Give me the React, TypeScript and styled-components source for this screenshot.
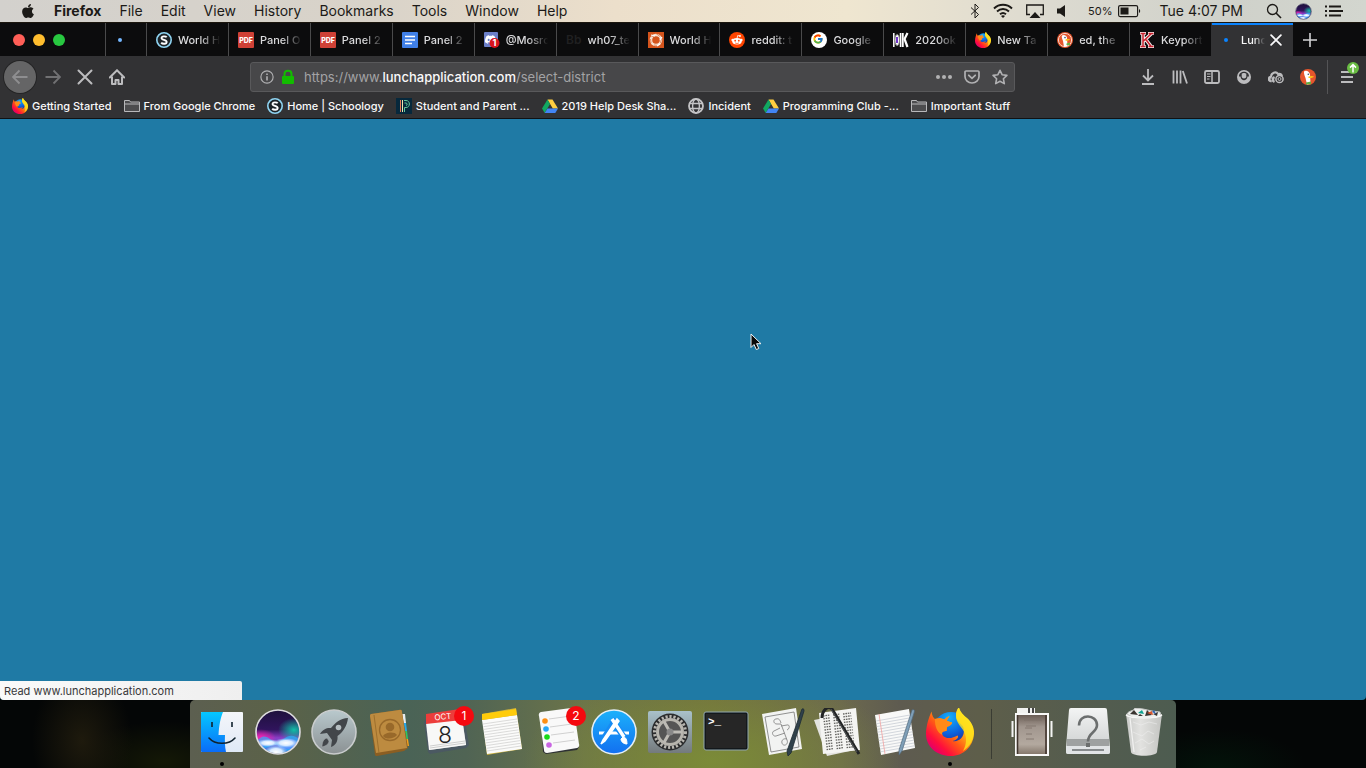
import React from "react";
import styled, { createGlobalStyle, css } from "styled-components";
import { FaApple } from "react-icons/fa";
import { FcGoogle } from "react-icons/fc";
import { SiDiscord } from "react-icons/si";

const Global = createGlobalStyle`
  * { box-sizing: border-box; }
  html, body { margin: 0; background: #040806; }
  body { font-family: Inter, "Noto Sans", sans-serif; font-size: 11px; }
  button { font: inherit; color: inherit; border: 0; padding: 0; background: none; }
  svg { display: block; flex: none; }
`;

const Desktop = styled.div`
  min-height: 100vh;
  display: flex;
  flex-direction: column;
`;

/* ---------- system menu bar ---------- */

const MenuBar = styled.header`
  height: 23px;
  padding: 0 23px 0 20px;
  display: flex;
  align-items: center;
  justify-content: space-between;
  color: #1c1a17;
  background: linear-gradient(90deg, #d3d1cd 0%, #d9d3c9 28%, #ecdfcb 45%, #efe6d0 62%, #dcdad0 77%, #cfd1ca 90%, #d3d6cf 100%);
  border-bottom: 1px solid #1b160e;
`;
const MenuGroup = styled.nav`
  display: flex;
  align-items: center;
  gap: 18px;
`;
const MenuItem = styled.button<{ $bold?: boolean }>`
  font-size: 14px;
  line-height: 22px;
  font-weight: ${(p) => (p.$bold ? 700 : 400)};
`;
const StatusGroup = styled.div`
  display: flex;
  align-items: center;
  gap: 13px;
`;
const BatteryStatus = styled.div`
  display: flex;
  align-items: center;
  gap: 5px;
  margin: 0 6px 0 9px;
  font-size: 11px;
`;
const Clock = styled.time`
  font-size: 14px;
  line-height: 22px;
  margin-right: 10px;
`;

/* ---------- browser window ---------- */

const Browser = styled.main`
  flex: 1;
  display: flex;
  flex-direction: column;
  position: relative;
  color: #f9f9fa;
`;
const TabStrip = styled.div`
  height: 33px;
  display: flex;
  background: #0c0c0d;
`;
const WindowButtons = styled.div`
  width: 105px;
  padding-left: 13px;
  display: flex;
  align-items: center;
  gap: 8px;
`;
const Light = styled.button<{ $color: string }>`
  width: 12px;
  height: 12px;
  border-radius: 50%;
  background: ${(p) => p.$color};
`;
const TabButton = styled.button<{ $pinned?: boolean; $active?: boolean }>`
  ${(p) => (p.$pinned ? css`flex: none; width: 41px;` : css`flex: 1 1 80px;`)}
  min-width: 0;
  display: flex;
  align-items: center;
  gap: 6px;
  padding: 0 6px 0 9px;
  border-left: 1px solid #4a4a4b;
  color: #dcdcde;
  text-align: left;
  ${(p) =>
    p.$active &&
    css`
      gap: 4px;
      padding-right: 11px;
      background: #323234;
      border-left-color: #323234;
      box-shadow: inset 0 2px 0 #0a84ff;
      color: #f9f9fa;
    `}
`;
const TabTitle = styled.span`
  flex: 1;
  min-width: 0;
  overflow: hidden;
  white-space: nowrap;
  line-height: 16px;
  font-weight: 500;
  mask-image: linear-gradient(90deg, #000 50%, transparent 96%);
`;
const LoadingDot = styled.span<{ $color: string }>`
  width: 16px;
  flex: none;
  &::before {
    content: "";
    display: block;
    width: 4px;
    height: 4px;
    margin-left: 3px;
    border-radius: 50%;
    background: ${(p) => p.$color};
  }
`;
const NewTabButton = styled.button`
  flex: none;
  width: 73px;
  padding-left: 9px;
`;

const NavBar = styled.div`
  height: 41px;
  display: flex;
  align-items: center;
  background: #323234;
  padding: 0 3px 0 4px;
`;
const NavButtons = styled.div`
  width: 246px;
  display: flex;
  align-items: center;
`;
const ToolButton = styled.button<{ $round?: boolean }>`
  width: 32px;
  height: 32px;
  display: grid;
  place-items: center;
  color: #bcbcbe;
  ${(p) =>
    p.$round &&
    css`
      margin-right: 1px;
      border-radius: 50%;
      background: #656566;
      box-shadow: 0 0 0 1px #242425;
      color: #8e8e90;
    `}
`;
const ForwardButton = styled(ToolButton)`
  color: #717173;
`;
const UrlBar = styled.label`
  flex: 1;
  height: 30px;
  display: flex;
  align-items: center;
  gap: 6px;
  padding: 0 6px 0 9px;
  border: 1px solid #59595b;
  border-radius: 3px;
  background: #474749;
  color: #b1b1b3;
`;
const UrlText = styled.span`
  margin-left: 2px;
  font-size: 13px;
  line-height: 20px;
  color: #a3a3a5;
  white-space: nowrap;
  b { font-weight: 500; color: #f9f9fa; }
`;
const UrlInput = styled.input`
  flex: 1;
  min-width: 0;
  height: 24px;
  border: 0;
  outline: 0;
  background: transparent;
  color: #f9f9fa;
  font: inherit;
`;
const UrlActions = styled.span`
  display: flex;
  align-items: center;
  gap: 12px;
`;
const ToolGroup = styled.div`
  width: 348px;
  display: flex;
  justify-content: flex-end;
  align-items: center;
`;
const Divider = styled.span`
  width: 1px;
  height: 34px;
  margin: 0 3px;
  background: #545456;
`;
const MenuButton = styled(ToolButton)`
  position: relative;
`;
const UpdateBadge = styled.span`
  position: absolute;
  top: 1px;
  right: 4px;
`;

const BookmarkBar = styled.nav`
  height: 22px;
  padding: 0 12px 4px;
  display: flex;
  align-items: center;
  gap: 12px;
  background: #323234;
  border-bottom: 1px solid #101214;
`;
const Bookmark = styled.a`
  display: flex;
  align-items: center;
  gap: 4px;
  color: #f9f9fa;
  text-decoration: none;
  white-space: nowrap;
  line-height: 16px;
  font-weight: 500;
`;
const Page = styled.section`
  flex: 1;
  background: #1f7aa5;
  border-radius: 0 0 4px 4px;
`;
const StatusTip = styled.output`
  position: absolute;
  left: 0;
  bottom: 0;
  width: 242px;
  height: 19px;
  padding-left: 4px;
  border-radius: 0 2px 0 4px;
  background: linear-gradient(90deg, #fafafa, #efefef);
  color: #38383a;
  line-height: 20px;
`;
const Pointer = styled.span`
  position: absolute;
  left: 750px;
  top: 310px;
`;

/* ---------- dock ---------- */

const DockArea = styled.footer`
  height: 68px;
  display: flex;
  justify-content: center;
  background:
    radial-gradient(ellipse 50px 70px at 6% 60%, #1e1a0d 0%, transparent 100%),
    radial-gradient(ellipse 90px 40px at 12% 90%, #141806 0%, transparent 100%),
    radial-gradient(ellipse 90px 40px at 89% 100%, #03130a 0%, transparent 100%),
    #040606;
`;
const Dock = styled.nav`
  display: flex;
  gap: 8px;
  padding: 0 8px;
  border-radius: 5px 5px 0 0;
  background:
    radial-gradient(ellipse 190px 90px at 53% 90%, #7b8b38 0%, transparent 100%),
    linear-gradient(90deg, #5c5f50 0%, #5b6248 9%, #4a6356 22%, #506454 28%, #6c7449 40%, #73713f 53%, #6c694e 66%, #5e5b50 72%, #5e5e4a 80%, #535c4f 92%, #4d5c50 100%);
`;
const DockItem = styled.button<{ $running?: boolean }>`
  position: relative;
  width: 48px;
  height: 68px;
  padding-top: 8px;
  display: flex;
  align-items: flex-start;
  &::after {
    content: "";
    display: ${(p) => (p.$running ? "block" : "none")};
    position: absolute;
    left: 22px;
    bottom: 2px;
    width: 4px;
    height: 4px;
    border-radius: 50%;
    background: #000;
  }
`;
const DockBadge = styled.span`
  position: absolute;
  top: 6px;
  right: -4px;
  width: 20px;
  height: 20px;
  border-radius: 50%;
  background: #f5090f;
  color: #fff;
  font-size: 12px;
  line-height: 20px;
  text-align: center;
`;
const DockDivider = styled.span`
  width: 1px;
  height: 50px;
  margin: 9px 8px 0 9px;
  background: #3a3c33;
`;

/* ---------- small icons ---------- */

const Svg = ({ s = 16, children, vb = "0 0 16 16", w }: { s?: number; w?: number; vb?: string; children: React.ReactNode }) => (
  <svg width={w ?? s} height={s} viewBox={vb} fill="none">{children}</svg>
);

const FirefoxLogo = ({ s, id }: { s: number; id: string }) => (
  <Svg s={s} vb="0 0 48 48">
    <defs>
      <linearGradient id={id + "-body"} x1="0.85" y1="0.1" x2="0.15" y2="0.85">
        <stop offset="0" stopColor="#fff12e" /><stop offset="0.3" stopColor="#ffc018" />
        <stop offset="0.6" stopColor="#ff5a15" /><stop offset="0.85" stopColor="#ff0f3c" /><stop offset="1" stopColor="#e80064" />
      </linearGradient>
      <radialGradient id={id + "-globe"} cx="0.45" cy="0.15" r="0.9">
        <stop offset="0" stopColor="#15b0fb" /><stop offset="0.5" stopColor="#0b62de" /><stop offset="1" stopColor="#2a1575" />
      </radialGradient>
    </defs>
    <circle cx="25" cy="22" r="18" fill={`url(#${id}-globe)`} />
    <path d="M5.500 3.500C6 7.500 7.500 10 9 11c4-1.500 7-.5 9.500.5 2-2.500 4-3 5-3-2 2-2.500 3.500-2.500 4.500l5 1.500c.3 2-3 3.500-5 4.500l-.5 4c-3 0-5.500 1-4 4 3 4.500 10 3.500 15 .5 2 2-2 5-5 5.500 7 1.500 13-5 11-13C36.500 16 30 14 30 7c0-4 1.500-6 3-8 .5 4 4 8 9 12 4 4 6.500 9.500 6 15C47 39 37 48 25 48 10 48 0 38 0 26 0 18 3 9 5.500 3.500Z" fill={`url(#${id}-body)`} />
    <path d="M9 11c4-1.500 7-.5 9.500.5 2-2.500 4-3 5-3-2 2-2.500 3.500-2.500 4.500l5 1.500c.3 2-3 3.500-5 4.500l-.5 4c-3 0-5.500 1-4 4-5-2-8-9-7.500-16Z" fill="#ff8a18" />
    <path d="M33 0c.5 4 4 7 9 11 4 4 6 9.500 5.500 15C47 33 43 39 37 43c4-7 4-15 0-21-2.500-4-7-8-7-14 0-4 1.500-6 3-8Z" fill="#ffe21c" fillOpacity="0.8" />
  </Svg>
);

const Schoology = () => (
  <Svg>
    <circle cx="8" cy="8" r="7.200" fill="#1d2327" stroke="#8fd4f2" strokeWidth="1.600" />
    <path d="M10.700 5.300C9.800 4.200 5.700 3.800 5.500 6c-.2 2.200 5.200 1.500 5.200 4 0 2.300-4.300 2.200-5.500.6" stroke="#fff" strokeWidth="1.800" />
  </Svg>
);
const Pdf = () => (
  <Svg>
    <rect width="16" height="16" rx="1" fill="#cf4136" />
    <text x="8" y="10.700" textAnchor="middle" fontSize="7" fontWeight="800" fill="#fff">PDF</text>
  </Svg>
);
const Docs = () => (
  <Svg>
    <rect width="16" height="16" rx="1" fill="#4080e8" />
    <path d="M3 4.500h10M3 8h10M3 11.500h7" stroke="#fff" strokeWidth="1.700" />
  </Svg>
);
const DiscordTab = () => (
  <Svg>
    <rect x="0" y="0" width="14" height="15" rx="1" fill="#6b7fc8" />
    <SiDiscord x="1" y="2" width="12" height="10" color="#fff" />
    <circle cx="10.500" cy="11" r="5" fill="#d8141c" />
    <text x="10.500" y="14.200" textAnchor="middle" fontSize="9" fontWeight="700" fill="#fff">1</text>
  </Svg>
);
const Blackboard = () => (
  <Svg><text x="0" y="12" fontSize="12" fontWeight="600" fill="#202021">Bb</text></Svg>
);
const OrigamiLogo = () => (
  <Svg>
    <rect width="16" height="16" fill="#d4541c" />
    <circle cx="8" cy="8" r="5" stroke="#f7e3d4" strokeWidth="2.400" />
    <path d="M2.500 3.500 6 5M8 1.500l4 3M13.500 6l-1 5M11 13.500l-5-.5M3 11l-.5-4" stroke="#d4541c" strokeWidth=".6" />
    <path d="M3 3 7 4M14 5l-2 3M9 14l3-2" stroke="#fff" strokeWidth="1.200" />
  </Svg>
);
const RedditTab = () => (
  <Svg>
    <circle cx="8" cy="8" r="8" fill="#ff4500" />
    <ellipse cx="8" cy="9.300" rx="4.700" ry="3.300" fill="#fff" />
    <circle cx="3.600" cy="8" r="1.200" fill="#fff" /><circle cx="12.400" cy="8" r="1.200" fill="#fff" />
    <path d="m8 6.500.7-3 2.200.6" stroke="#fff" strokeWidth=".8" /><circle cx="11" cy="4" r=".9" fill="#fff" />
    <circle cx="6.200" cy="8.700" r=".9" fill="#ff4500" /><circle cx="9.800" cy="8.700" r=".9" fill="#ff4500" />
    <path d="M6 10.800c1 .9 3 .9 4 0" stroke="#ff4500" strokeWidth=".7" />
  </Svg>
);
const GoogleTab = () => (
  <Svg><circle cx="8" cy="8" r="8" fill="#fff" /><FcGoogle x="1.500" y="1.500" width="13" height="13" /></Svg>
);
const OkTab = () => (
  <Svg>
    <rect y="1" width="15" height="14" fill="#111" />
    <path d="M.8 1v14M7.500 1v14" stroke="#fff" strokeWidth="1.500" />
    <path d="M9.700 1v14" stroke="#fff" strokeWidth="2" />
    <ellipse cx="4.200" cy="8" rx="2.300" ry="5.500" fill="#fff" stroke="#888" />
    <path d="M4 5v6" stroke="#7034c8" strokeWidth="2" />
    <path d="M14.500 1 11.500 7l3 8" stroke="#fff" strokeWidth="2.200" />
  </Svg>
);
const Duck = () => (
  <Svg>
    <circle cx="8" cy="8" r="8" fill="#e5552c" />
    <circle cx="8" cy="8" r="6.600" stroke="#f7d3c6" strokeWidth="1" />
    <path d="M5 3.500c1.500-1.200 4.500-.5 5 2l.2 3.500.3 5-3.500.8L6 9C4.800 6 4.500 4.500 5 3.500Z" fill="#fff" />
    <circle cx="8" cy="5.600" r=".8" fill="#34506b" />
    <path d="M8.500 7.500c2-.6 3.500-.5 4.500 0-1 1-3 1.500-4.500 1.300Z" fill="#fbc615" />
    <path d="M9.500 11.500 13 10.500v3L9.500 13Z" fill="#62b145" />
  </Svg>
);
const DuckPlain = () => (
  <Svg>
    <circle cx="8" cy="8" r="8" fill="#e5552c" />
    <path d="M4 2.500C6 .8 9.500 2.500 10 5.500l.2 3 .3 6.500-3.500.5L5.500 9C4.300 6 3.800 4 4 2.500Z" fill="#fff" />
    <circle cx="8.300" cy="5.300" r=".8" fill="#34506b" />
    <path d="M8.500 7.500c2.500-.8 4.500-.6 5.500 0-1 1.200-3.500 1.700-5.500 1.500Z" fill="#fbc615" />
    <path d="M6 13.500 11 12.500v2.700L6 15.400Z" fill="#62b145" />
  </Svg>
);
const Keyport = () => (
  <Svg>
    <path d="M1 1h6M1 15h6M9 1h6M9 15h6M4 1v14M12.500 1.500 4.500 9M6.500 7l6 8" stroke="#f5eeee" strokeWidth="3.600" />
    <path d="M1.500 1.500h5M1.500 14.500h5M9.500 1.500h5M9.500 14.500h5M4 1v14M12.500 1.500 4.500 9M6.500 7l6 8" stroke="#c8222e" strokeWidth="1.500" />
  </Svg>
);
const Folder = () => (
  <Svg>
    <path d="M.5 13.500v-11h5l1 1.500h9v9.500ZM.5 6h15" fill="#4c4c4e" stroke="#b8b8ba" />
  </Svg>
);
const PowerSchool = () => (
  <Svg>
    <rect width="16" height="16" fill="#06283c" />
    <path d="M4.500 2v12" stroke="#e8795a" /><path d="M6.500 2v12" stroke="#f0e6b0" />
    <path d="M8 2.500h2c4.500 0 4.500 7 0 7H8.500V14M8.500 5h1.500c1.500 0 1.500 2.500 0 2.500" stroke="#5fc89b" />
  </Svg>
);
const Drive = () => (
  <Svg>
    <path d="M5.500 1.500h5l5.500 9h-5.200Z" fill="#ffcd40" />
    <path d="M5.500 1.500 0 10.500 2.700 15 8 6Z" fill="#11a861" />
    <path d="M5.500 10.500H16L13.300 15H2.700Z" fill="#4285f4" />
  </Svg>
);
const Globe = () => (
  <Svg>
    <circle cx="8" cy="8" r="7" stroke="#c4c4c6" strokeWidth="1.800" />
    <path d="M1.500 5.500h13M1.500 10.500h13" stroke="#c4c4c6" strokeWidth="1.400" />
    <ellipse cx="8" cy="8" rx="3.400" ry="7" stroke="#c4c4c6" strokeWidth="1.400" />
  </Svg>
);
const Arrow = ({ back }: { back?: boolean }) => (
  <Svg>
    <path d={back ? "M15.500 8H1M7.500 1.500 1 8l6.500 6.500" : "M.5 8H15M8.500 1.500 15 8l-6.500 6.500"} stroke="currentColor" strokeWidth="1.800" />
  </Svg>
);
const Cross = ({ s = 16 }: { s?: number }) => (
  <Svg s={s}><path d="M1.500 1.500l13 13M14.500 1.500l-13 13" stroke="currentColor" strokeWidth={s > 12 ? 2 : 2.400} strokeLinecap="round" /></Svg>
);
const Home = () => (
  <Svg>
    <path d="M.8 8.500 8 1.300l7.200 7.200" stroke="currentColor" strokeWidth="2" strokeLinecap="round" />
    <path d="M3 7.500V15h3.500v-4h3v4H13V7.500" stroke="currentColor" strokeWidth="2" strokeLinejoin="round" />
  </Svg>
);
const Siri = ({ s, id }: { s: number; id: string }) => (
  <Svg s={s} vb="0 0 48 48">
    <defs>
      <linearGradient id={id + "-sky"} x1="0" y1="0" x2="0" y2="1">
        <stop offset="0" stopColor="#1b1038" /><stop offset="0.45" stopColor="#30145c" /><stop offset="0.62" stopColor="#8a3cc4" /><stop offset="1" stopColor="#1a9bf0" />
      </linearGradient>
      <radialGradient id={id + "-pink"}><stop offset="0" stopColor="#ff1fae" /><stop offset="1" stopColor="#ff1fae" stopOpacity="0" /></radialGradient>
      <radialGradient id={id + "-teal"}><stop offset="0" stopColor="#10c0a8" /><stop offset="1" stopColor="#10c0a8" stopOpacity="0" /></radialGradient>
      <radialGradient id={id + "-white"}><stop offset="0" stopColor="#fff" /><stop offset="0.5" stopColor="#d8eaff" /><stop offset="1" stopColor="#9fd4ff" stopOpacity="0" /></radialGradient>
      <clipPath id={id + "-clip"}><circle cx="24" cy="24" r="21.500" /></clipPath>
    </defs>
    <g clipPath={`url(#${id}-clip)`}>
      <rect width="48" height="48" fill={`url(#${id}-sky)`} />
      <ellipse cx="40" cy="22" rx="16" ry="12" fill={`url(#${id}-teal)`} />
      <ellipse cx="7" cy="30" rx="15" ry="9" fill={`url(#${id}-pink)`} />
      <path d="M2 34C10 24 14 30 20 34s14-14 26-2v8C36 48 30 40 24 37S10 46 2 38Z" fill="#24b8ff" fillOpacity="0.65" />
      <path d="M2 38c8-6 12-8 18-2s14-14 24 0c-8 7-15 7-21 1S10 42 2 38Z" fill="#5a8dff" fillOpacity="0.8" />
      <ellipse cx="14" cy="35" rx="12" ry="4" fill={`url(#${id}-white)`} />
      <ellipse cx="32" cy="35" rx="13" ry="5" fill={`url(#${id}-white)`} />
      <ellipse cx="22" cy="44" rx="12" ry="7" fill={`url(#${id}-white)`} />
    </g>
    <circle cx="24" cy="24" r="22" stroke={s > 20 ? "#dddbe0" : "#2b2450"} strokeWidth="1.600" />
  </Svg>
);

/* ---------- dock artwork, 48 x 48 ---------- */

const Art = ({ children }: { children: React.ReactNode }) => <Svg s={48} vb="0 0 48 48">{children}</Svg>;

const Finder = () => (
  <Art>
    <defs><linearGradient id="finder-left" x1="0" y1="0" x2="0" y2="1"><stop stopColor="#05c8ff" /><stop offset="1" stopColor="#0a6cf8" /></linearGradient>
      <linearGradient id="finder-right" x1="0" y1="0" x2="0" y2="1"><stop stopColor="#f4f6fa" /><stop offset="1" stopColor="#dfe9f6" /></linearGradient></defs>
    <rect x="3" y="4" width="42" height="40" rx="1" fill="url(#finder-right)" />
    <path d="M4 4h21c-2.500 6-4 13-4.500 23H27c-.3 6-.2 11 1 17H4a1 1 0 0 1-1-1V5a1 1 0 0 1 1-1Z" fill="url(#finder-left)" />
    <path d="M14 14v5M34 14v5" stroke="#10222e" strokeWidth="1.600" />
    <path d="M11 30c6 7 20 7 26 0" stroke="#10222e" strokeWidth="1.600" strokeLinecap="round" />
  </Art>
);
const Launchpad = () => (
  <Art>
    <defs><linearGradient id="launchpad" x1="0" y1="0" x2="0" y2="1"><stop stopColor="#b9c9cd" /><stop offset="1" stopColor="#8b9193" /></linearGradient></defs>
    <circle cx="24" cy="24" r="22" fill="url(#launchpad)" stroke="#c9cccd" strokeWidth="1.600" />
    <path d="M38 10c-8 .5-13 5-17 10-4-.5-8 1-11 6l7-1 5 7-1 7c5-2 7-6 6.500-11C33 24 37 18 38 10Z" fill="#42464a" />
    <circle cx="28.500" cy="19.500" r="2.800" fill="#b5bec1" />
    <path d="M17 30c-4 1-5 5-5 9 4-1 7-3 7-6Z" fill="#42464a" stroke="#a5aaac" strokeWidth=".6" />
  </Art>
);
const Contacts = () => (
  <Art>
    <path d="m35 6 4 0 1 9h-4Z" fill="#e8ecee" /><path d="m37 15h3l1 8h-3Z" fill="#27a9e8" />
    <path d="M38 23h3l1 8h-3Z" fill="#31c463" /><path d="M39 31h3l1 7h-3Z" fill="#f5a21e" />
    <path d="m5 6 28-4a2 2 0 0 1 3 2l6 36-4 3-27 5a2 2 0 0 1-2-1L4 8a2 2 0 0 1 1-2Z" fill="#8b5e22" />
    <path d="m5 6 28-4a2 2 0 0 1 3 2l5 36-31 5L4 8a2 2 0 0 1 1-2Z" fill="#bd8b40" />
    <path d="m8 7 5 38" stroke="#9d6f2c" />
    <circle cx="24" cy="22" r="10.500" stroke="#98692a" strokeWidth="1.300" />
    <circle cx="24" cy="19" r="4.300" fill="#98692a" /><path d="M17 28c2-4 12-5 14-1-3 4-11 5-14 1Z" fill="#98692a" />
  </Art>
);
const Calendar = () => (
  <Art>
    <path d="m2 14 5-8 34-5 6 36-3 3-36 6-2-2Z" fill="#4b5962" />
    <path d="m6 12 34-4 4 29-36 5Z" fill="#c8c8c8" />
    <path d="m4 15 36-4 4 26-37 5Z" fill="#f8f8f7" />
    <path d="M4 6 38 1l2 11-36 4Z" fill="#ec3d3b" />
    <text x="21" y="11.500" textAnchor="middle" fontSize="8" fill="#fff" transform="rotate(-6 21 10)">OCT</text>
    <text x="23" y="35" textAnchor="middle" fontSize="23" fontWeight="300" fill="#222">8</text>
    <path d="m8 38 35-5M8 40l35-5" stroke="#bcbcbc" strokeWidth=".7" />
  </Art>
);
const lines = (n: number, y0: number, dy: number, a: number, b: number, slope: number) =>
  Array.from({ length: n }, (_, i) => `M${a + i * 0.4} ${y0 + i * dy}l${b - a} ${-slope}`).join("");
const Notes = () => (
  <Art>
    <path d="M4 6 38 0l6 41-35 6Z" fill="#cdb23d" />
    <path d="m4 12 35-5 5 34-35 5Z" fill="#fbfbfa" />
    <path d="M4 6 38 1l1 6-35 5Z" fill="#ffcc0a" />
    <path d={lines(11, 16, 2.7, 5, 39, 5)} stroke="#d2d2d0" strokeWidth=".8" />
  </Art>
);
const Reminders = () => (
  <Art>
    <path d="m7 6 32-4 6 37-2 3-31 4-3-2Z" fill="#2d3033" />
    <path d="m7 4 30-4a3 3 0 0 1 3 2l5 34a3 3 0 0 1-2 4l-30 5a3 3 0 0 1-3-3L5 8a3 3 0 0 1 2-4Z" fill="#f9f9f9" />
    <path d="m15 11 22-3M16 19l22-3M17 27l23-3M19 35l22-3" stroke="#ccc" strokeWidth=".9" />
    <circle cx="11" cy="13" r="2.800" fill="#ff8f12" /><circle cx="12" cy="21" r="2.800" fill="#26a6f8" />
    <circle cx="13" cy="29" r="2.800" fill="#17d916" /><circle cx="15" cy="37" r="2.800" fill="#c964e2" />
  </Art>
);
const AppStore = () => (
  <Art>
    <defs><linearGradient id="app-store" x1="0" y1="0" x2="0" y2="1"><stop stopColor="#1cb1fb" /><stop offset="1" stopColor="#126ff0" /></linearGradient></defs>
    <circle cx="24" cy="24" r="22" fill="url(#app-store)" stroke="#e4eef6" strokeWidth="1.600" />
    <path d="M9 25h30" stroke="#fff" strokeWidth="3" />
    <path d="M26 11 12 33" stroke="#178bf3" strokeWidth="6" /><path d="m22 12 14 20" stroke="#178bf3" strokeWidth="6" />
    <path d="M27 11 13 32l-2 4 4-3L29 13Z" fill="#fff" stroke="#fff" strokeWidth="1.500" />
    <path d="m22 11 12 18" stroke="#fff" strokeWidth="3.400" />
    <path d="M33 29c3 0 4 3 4 7-3 0-6-2-6-5Z" fill="#fff" stroke="#fff" />
  </Art>
);
const Settings = () => (
  <Art>
    <defs><linearGradient id="settings-plate" x1="0" y1="0" x2="0" y2="1"><stop stopColor="#a9c1ca" /><stop offset="1" stopColor="#747a7d" /></linearGradient></defs>
    <rect x="2" y="3" width="44" height="42" rx="2" fill="url(#settings-plate)" />
    <circle cx="24" cy="24" r="18.500" fill="#2b2c2d" />
    <circle cx="24" cy="24" r="15.500" stroke="#b8b6b0" strokeWidth="3" strokeDasharray="2.200 1.800" />
    <circle cx="24" cy="24" r="12.500" fill="#555" stroke="#b7b5ae" strokeWidth="3" />
    <path d="M24 24h12M24 24l-6-10.500M24 24l-6 10.500" stroke="#bdbbb5" strokeWidth="3" />
    <circle cx="24" cy="24" r="3.500" fill="#888" />
  </Art>
);
const Terminal = () => (
  <Art>
    <rect x="2" y="4" width="44" height="38" rx="2" fill="#13181b" stroke="#91a6af" />
    <rect x="4" y="6" width="40" height="34" fill="#262626" />
    <text x="6" y="17" fontSize="11" fontWeight="700" fontFamily="Liberation Mono, monospace" fill="#fff">&gt;_</text>
  </Art>
);
const ScriptEditor = () => (
  <Art>
    <path d="m4 6 34-6 6 41-33 6Z" fill="#f2f3f2" />
    <path d="m7 9 29-5 5 35-28 5Z" stroke="#777" strokeWidth=".8" />
    <path d="M18 11c-3 0-3 5 1 5h4l6 16c2 5-4 7-5 3-1-3 2-5 5-4M18 11c3-1 4 1 5 4M22 20l-6 3c-3 1-1 6 2 5l9-3M23 18l6-1c3-1 3 4 0 5" stroke="#888" strokeWidth=".9" />
    <path d="M44 1c2-1 2 1 2 2L33 45l-3 3-1-5Z" fill="#30414b" stroke="#1d2b32" strokeWidth=".8" />
  </Art>
);
const TextPages = () => (
  <Art>
    <path d="m0 12 10-2 35 31-32 7Z" fill="#e3e3e0" />
    <path d="M5 5 42 0l4 42-37 4Z" fill="#f4f4f2" />
    {[0, 1, 2, 3, 4, 5, 6, 7, 8, 9, 10, 11, 12].map((i) => (
      <path key={i} d={`m${9 + i * 0.3} ${8 + i * 2.8} 7-1m3 0 7-1m3 0 8-1`} stroke="#62625f" strokeWidth="1.300" strokeDasharray="1.600 .8" />
    ))}
    <path d="M8 10C8 2 14-3 18 1l27 45" stroke="#222425" strokeWidth="3" />
    <path d="M17 1l26 43" stroke="#66696b" strokeWidth=".7" />
  </Art>
);
const TextEdit = () => (
  <Art>
    <path d="m5 7 34-6 6 39-34 7Z" fill="#f9f9f8" />
    <path d={lines(12, 13, 2.8, 6, 40, 6)} stroke="#c8cdd4" strokeWidth=".8" />
    <path d="m9 6 6 40" stroke="#f2a1a0" strokeWidth=".8" />
    <path d="M42 2c2-1 3 0 2 3L32 43l-3 4 0-5Z" fill="#7f9fb8" stroke="#52697b" strokeWidth=".7" />
  </Art>
);
const Photo = () => (
  <Art>
    <defs>
      <linearGradient id="photo-paper" x1="0" y1="0" x2="0" y2="1"><stop stopColor="#6a5d55" /><stop offset="0.3" stopColor="#a1968e" /><stop offset="0.75" stopColor="#b3a99f" /><stop offset="1" stopColor="#85786c" /></linearGradient>
    </defs>
    <path d="M9-1h18v7H9Z" fill="#f1f1ef" /><path d="M21 0v5M25 0v5" stroke="#444" strokeWidth="2" />
    <path d="M4.500 13v16M43.500 13v16" stroke="#f4f4f3" strokeWidth="2" />
    <rect x="7" y="5" width="34" height="43" fill="#f8f8f7" />
    <rect x="9" y="7" width="30" height="39" fill="url(#photo-paper)" />
    <path d="M9.500 7v39M38 7v39" stroke="#41352d" strokeWidth="1.600" />
    <path d="M16 12h18M18 18h10M17 20h7M18 26h6M18 31h8" stroke="#7b6f67" strokeWidth=".8" />
  </Art>
);
const Drawer = () => (
  <Art>
    <defs><linearGradient id="drawer-lid" x1="0" y1="0" x2="0" y2="1"><stop stopColor="#f3f4f4" /><stop offset="1" stopColor="#c9cccc" /></linearGradient></defs>
    <path d="M7 0h34a2 2 0 0 1 2 2l3 37v5a2 2 0 0 1-2 2H4a2 2 0 0 1-2-2v-5L5 2a2 2 0 0 1 2-2Z" fill="url(#drawer-lid)" />
    <path d="M3 31h42v7H3Z" fill="#9ea1a1" /><path d="M3 38h43v6a2 2 0 0 1-2 2H4a2 2 0 0 1-2-2v-6Z" fill="#e1e4e6" />
    <path d="M8 42h32" stroke="#55595b" strokeWidth="1.300" />
    <path d="M15 17.500C15 5 33 6 33 17c0 8-9 7-9 16.500" stroke="#6b6e6e" strokeWidth="2.600" />
    <rect x="22" y="35" width="4" height="4" fill="#6b6e6e" />
  </Art>
);
const Trash = () => (
  <Art>
    <defs><linearGradient id="trash-side"><stop stopColor="#c9cac8" /><stop offset="0.4" stopColor="#e2e2e0" /><stop offset="1" stopColor="#c4c5c2" /></linearGradient></defs>
    <path d="M6 6h36l-5 38c-1 5-25 5-26 0Z" fill="url(#trash-side)" />
    <path d="M7 6c2-4 6-2 8-6l8 1 9 2 8 1 1 4-8 2H14Z" fill="#eef0ee" stroke="#c4c6c4" />
    <path d="m10 6 4-4 4 5Zm15 2 2-6 5 5Zm8-2 5-2-1 4Zm-15 2 2-2 3 2Z" fill="#3a3430" /><path d="m18 5 4-3 2 4Z" fill="#10a391" /><path d="m27 5 5-2 1 4Z" fill="#d8562d" /><path d="m32 4 2-2 2 4Z" fill="#2c60b4" />
    <path d="M6 7c5 4 31 4 36 0" stroke="#f7f7f6" strokeWidth="1.600" />
    <path d="m13 14 8 3 8-3 8 2M13 24l9 4 6-5 6 3M15 35l7-4 7 5 5-3M20 42l6-3" stroke="#f2f2f1" strokeOpacity=".5" />
    <path d="m10 10 4 34" stroke="#f2f2f1" strokeWidth="1.200" />
  </Art>
);

/* ---------- data ---------- */

const menus = ["File", "Edit", "View", "History", "Bookmarks", "Tools", "Window", "Help"];
const tabs: [string, React.ReactNode][] = [
  ["World H", <Schoology />], ["Panel O", <Pdf />], ["Panel 2", <Pdf />], ["Panel 2", <Docs />],
  ["@Mosro", <DiscordTab />], ["wh07_te", <Blackboard />], ["World H", <OrigamiLogo />], ["reddit: t", <RedditTab />],
  ["Google", <GoogleTab />], ["2020ok", <OkTab />], ["New Ta", <FirefoxLogo s={16} id="fx-tab" />], ["ed, the", <Duck />], ["Keyport", <Keyport />],
];
const bookmarks: [string, React.ReactNode][] = [
  ["Getting Started", <FirefoxLogo s={16} id="fx-mark" />], ["From Google Chrome", <Folder />], ["Home | Schoology", <Schoology />],
  ["Student and Parent ...", <PowerSchool />], ["2019 Help Desk Sha...", <Drive />], ["Incident", <Globe />],
  ["Programming Club -...", <Drive />], ["Important Stuff", <Folder />],
];
const apps: { art: React.ReactNode; badge?: number; running?: boolean }[] = [
  { art: <Finder />, running: true }, { art: <Siri s={48} id="siri-dock" /> }, { art: <Launchpad /> }, { art: <Contacts /> },
  { art: <Calendar />, badge: 1 }, { art: <Notes /> }, { art: <Reminders />, badge: 2 }, { art: <AppStore /> },
  { art: <Settings /> }, { art: <Terminal /> }, { art: <ScriptEditor /> }, { art: <TextPages /> }, { art: <TextEdit /> },
  { art: <FirefoxLogo s={48} id="fx-dock" />, running: true },
];

export default function App() {
  return (
    <Desktop>
      <Global />
      <MenuBar>
        <MenuGroup>
          <FaApple size={16} />
          <MenuItem $bold>Firefox</MenuItem>
          {menus.map((m) => <MenuItem key={m}>{m}</MenuItem>)}
        </MenuGroup>
        <StatusGroup>
          <Svg w={10} vb="0 0 10 16"><path d="m1 4.500 7.500 7L5 15V1l3.500 3.500-7.500 7" stroke="currentColor" strokeWidth="1" /></Svg>
          <Svg w={20} vb="0 0 20 16">
            <path d="M1 5.500c5-5 13-5 18 0M4 8.500c3.500-3.300 8.500-3.300 12 0M7 11.300c2-1.700 4-1.700 6 0" stroke="currentColor" strokeWidth="1.900" />
            <path d="m8 13 2 2 2-2c-1-1-3-1-4 0Z" fill="currentColor" />
          </Svg>
          <Svg w={18} vb="0 0 18 16"><path d="M4 11.500H.7V2h16.600v9.500H14" stroke="currentColor" strokeWidth="1.300" /><path d="M9 9l5.500 6h-11Z" fill="currentColor" /></Svg>
          <Svg w={9} vb="0 0 9 16"><path d="M0 5.500h3l5-3.500v12l-5-3.500H0Z" fill="currentColor" /></Svg>
          <BatteryStatus>
            50%
            <Svg w={23} vb="0 0 23 16"><rect x=".6" y="2.600" width="19" height="11" rx="1.500" stroke="currentColor" strokeWidth="1.200" /><rect x="2.500" y="4.500" width="8" height="7" fill="currentColor" /><path d="M21 6c1.600.5 1.600 3.500 0 4Z" fill="currentColor" /></Svg>
          </BatteryStatus>
          <Clock>Tue 4:07 PM</Clock>
          <Svg><circle cx="6.500" cy="6.500" r="5" stroke="currentColor" strokeWidth="1.300" /><path d="m10 10 5 5" stroke="currentColor" strokeWidth="1.600" /></Svg>
          <Siri s={17} id="siri-bar" />
          <Svg w={18} vb="0 0 18 16"><path d="M0 3.500h2M4 3.500h12M0 8h2M4 8h14M0 12.500h2M4 12.500h12" stroke="currentColor" strokeWidth="1.800" /></Svg>
        </StatusGroup>
      </MenuBar>

      <Browser>
        <TabStrip>
          <WindowButtons>
            <Light $color="#ff5f57" aria-label="Close" />
            <Light $color="#ffbd2e" aria-label="Minimize" />
            <Light $color="#28c840" aria-label="Zoom" />
          </WindowButtons>
          <TabButton $pinned aria-label="Pinned tab"><LoadingDot $color="#75b8ff" /></TabButton>
          {tabs.map(([title, icon], i) => (
            <TabButton key={i}>{icon}<TabTitle>{title}</TabTitle></TabButton>
          ))}
          <TabButton $active>
            <LoadingDot $color="#0a84ff" />
            <TabTitle>Lunc</TabTitle>
            <Cross s={12} />
          </TabButton>
          <NewTabButton aria-label="New tab">
            <Svg><path d="M8 1v14M1 8h14" stroke="#d4d4d6" strokeWidth="1.600" /></Svg>
          </NewTabButton>
        </TabStrip>

        <NavBar>
          <NavButtons>
            <ToolButton $round aria-label="Back"><Arrow back /></ToolButton>
            <ForwardButton aria-label="Forward"><Arrow /></ForwardButton>
            <ToolButton aria-label="Stop"><Cross /></ToolButton>
            <ToolButton aria-label="Home"><Home /></ToolButton>
          </NavButtons>
          <UrlBar>
            <Svg s={14}><circle cx="8" cy="8" r="7" stroke="currentColor" strokeWidth="1.300" /><path d="M8 7v5M8 4v1.800" stroke="currentColor" strokeWidth="1.800" /></Svg>
            <Svg><rect x="2" y="7" width="12" height="8" rx="1" fill="#12bc00" /><path d="M4.500 8V5c0-4.500 7-4.500 7 0v3" stroke="#12bc00" strokeWidth="2" /></Svg>
            <UrlText>https://www.<b>lunchapplication.com</b>/select-district</UrlText>
            <UrlInput aria-label="Address" />
            <UrlActions>
              <Svg><circle cx="2" cy="8" r="2" fill="currentColor" /><circle cx="8" cy="8" r="2" fill="currentColor" /><circle cx="14" cy="8" r="2" fill="currentColor" /></Svg>
              <Svg><path d="M2 2h12a1 1 0 0 1 1 1v4.500a7 6.500 0 0 1-14 0V3a1 1 0 0 1 1-1Z" stroke="currentColor" strokeWidth="1.700" /><path d="M4.800 6.300 8 9.300l3.200-3" stroke="currentColor" strokeWidth="1.800" strokeLinecap="round" /></Svg>
              <Svg><path d="m8 1.300 2.100 4.400 4.800.7-3.500 3.400.9 4.800L8 12.300l-4.300 2.300.9-4.800L1.100 6.400l4.800-.7Z" stroke="currentColor" strokeWidth="1.600" strokeLinejoin="round" /></Svg>
            </UrlActions>
          </UrlBar>
          <ToolGroup>
            <ToolButton aria-label="Downloads"><Svg><path d="M8 0v11M3 6.500l5 5 5-5M2 15h12" stroke="currentColor" strokeWidth="1.800" /></Svg></ToolButton>
            <ToolButton aria-label="Library"><Svg><path d="M1.500 1.500v13M5 1.500v13M8.500 1.500v13M10.800 2l4.200 12.500" stroke="currentColor" strokeWidth="1.800" /></Svg></ToolButton>
            <ToolButton aria-label="Sidebars"><Svg><rect x="1" y="2" width="14" height="12" rx="1.500" stroke="currentColor" strokeWidth="1.800" /><path d="M8 2v12" stroke="currentColor" strokeWidth="1.500" /><path d="M3 5h3.500M3 7.500h3.500M3 10h2.500" stroke="currentColor" /></Svg></ToolButton>
            <ToolButton aria-label="Account"><Svg><circle cx="8" cy="8" r="7" fill="currentColor" /><path d="M3 7.500C3 1.300 13 1.300 13 7.500h-1.500C11 12.500 5 12.500 4.500 7.500Z" fill="#323234" /><path d="M5.700 4.800c.8-1.100 3.800-1.100 4.600 0v2.400c0 3-4.600 3-4.600 0Z" fill="currentColor" /></Svg></ToolButton>
            <ToolButton aria-label="Extension"><Svg><path d="M3.500 12.500C-.5 12 .5 7 3.500 8M3 8C3 3.500 8 2 10 5c2-.5 3.500.5 4 2M6.500 13c-2-1-2.500-3.500 0-5" stroke="currentColor" strokeWidth="2.200" /><circle cx="4" cy="10.500" r="1.700" stroke="currentColor" /><circle cx="11.500" cy="10" r="3.600" stroke="currentColor" strokeWidth="1.500" /><circle cx="11.500" cy="10" r="1.500" stroke="currentColor" /></Svg></ToolButton>
            <ToolButton aria-label="Privacy"><DuckPlain /></ToolButton>
            <Divider />
            <MenuButton aria-label="Menu">
              <Svg><path d="M2 3h12M2 8h12M2 13h12" stroke="currentColor" strokeWidth="1.800" /></Svg>
              <UpdateBadge>
                <Svg s={12}><circle cx="8" cy="8" r="8" fill="#69bd43" /><path d="M8 14V4M4 7.500 8 3.500l4 4" stroke="#fff" strokeWidth="2" /></Svg>
              </UpdateBadge>
            </MenuButton>
          </ToolGroup>
        </NavBar>

        <BookmarkBar>
          {bookmarks.map(([t, icon]) => <Bookmark key={t} href="#">{icon}{t}</Bookmark>)}
        </BookmarkBar>
        <Page />
        <StatusTip>Read www.lunchapplication.com</StatusTip>
        <Pointer>
          <Svg s={18} w={12} vb="0 0 12 18"><path d="M1 1v13.500l3-3 2.300 5 2.500-1L6.600 10.700H11Z" fill="#0a0a0a" stroke="#f2f2f2" /></Svg>
        </Pointer>
      </Browser>

      <DockArea>
        <Dock>
          {apps.map((a, i) => (
            <DockItem key={i} $running={a.running}>
              {a.art}
              {a.badge && <DockBadge>{a.badge}</DockBadge>}
            </DockItem>
          ))}
          <DockDivider />
          <DockItem><Photo /></DockItem>
          <DockItem><Drawer /></DockItem>
          <DockItem><Trash /></DockItem>
        </Dock>
      </DockArea>
    </Desktop>
  );
}
